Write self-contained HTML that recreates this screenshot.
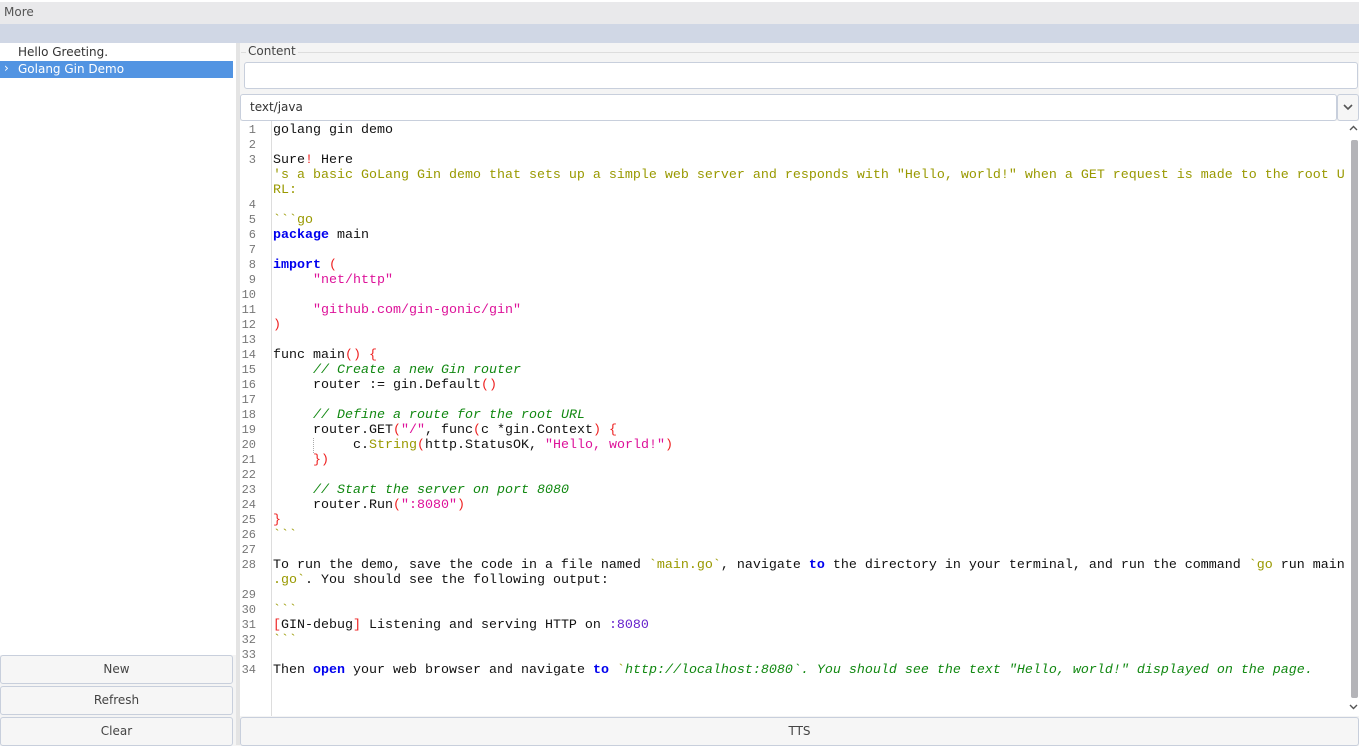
<!DOCTYPE html>
<html><head><meta charset="utf-8"><style>
*{box-sizing:border-box;margin:0;padding:0}
body{width:1359px;height:745px;overflow:hidden;background:#f4f4f4;font-family:"DejaVu Sans","Liberation Sans",sans-serif;font-size:12px;color:#333;position:relative}
.a{position:absolute}
.btn{position:absolute;border:1px solid #c8cfdc;border-radius:3px;background:#f6f6f6;text-align:center;color:#444;font-size:12px}
.code{font-family:"Liberation Mono",monospace;font-size:13.33px;color:#111;white-space:pre}
.ln{position:absolute;left:240px;width:16px;text-align:right;font-family:"Liberation Mono",monospace;font-size:12px;color:#777}
.o{color:#999900}.k{color:#0000ee;font-weight:bold}.s{color:#dd1199}.b{color:#ee2222}.c{color:#118811;font-style:italic}.p{color:#6622cc}
</style></head><body>
<div class="a" style="left:0;top:0;width:1359px;height:24px;background:#e9e9eb;border-top:2px solid #fff"></div>
<div class="a" style="left:4px;top:5px;font-size:12px;color:#555">More</div>
<div class="a" style="left:0;top:24px;width:1359px;height:19px;background:#d0d7e5"></div>
<div class="a" style="left:0;top:43px;width:236px;height:612px;background:#fff"></div>
<div class="a" style="left:18px;top:45px;color:#333">Hello Greeting.</div>
<div class="a" style="left:0;top:61px;width:233px;height:17px;background:#5294e2"></div>
<div class="a" style="left:4px;top:61px;color:#fff">›</div>
<div class="a" style="left:18px;top:62px;color:#fff">Golang Gin Demo</div>
<div class="btn" style="left:0;top:655px;width:233px;height:29px;line-height:27px">New</div>
<div class="btn" style="left:0;top:686px;width:233px;height:29px;line-height:27px">Refresh</div>
<div class="btn" style="left:0;top:717px;width:233px;height:29px;line-height:27px">Clear</div>
<div class="a" style="left:236px;top:43px;width:4px;height:702px;background:#e4e4e4"></div>
<div class="a" style="left:241px;top:52px;width:1118px;height:1px;background:#ddd"></div>
<div class="a" style="left:246px;top:44px;padding:0 2px;background:#f4f4f4;color:#444">Content</div>
<div class="a" style="left:244px;top:62px;width:1114px;height:27px;background:#fff;border:1px solid #c8cfdc;border-radius:3px"></div>
<div class="a" style="left:240px;top:94px;width:1097px;height:27px;background:#fff;border:1px solid #c8cfdc;border-radius:3px"></div>
<div class="a" style="left:250px;top:100px;color:#333">text/java</div>
<div class="a" style="left:1337px;top:94px;width:22px;height:27px;background:#f6f6f6;border:1px solid #c8cfdc;border-radius:3px"></div>
<svg class="a" style="left:1342px;top:101px" width="12" height="12"><path d="M2 4l4 4 4-4" stroke="#555" stroke-width="1.6" fill="none"/></svg>
<div class="a" style="left:240px;top:121px;width:1119px;height:595px;background:#fff"></div>
<div class="a" style="left:271px;top:121px;width:1px;height:595px;background:#ddd"></div>
<div class="a" style="left:1348px;top:121px;width:11px;height:595px;background:#fff"></div>
<div class="a" style="left:1351px;top:140px;width:7px;height:558px;background:#b4b4b8;border-radius:2px"></div>
<svg class="a" style="left:1348px;top:123px" width="11" height="10"><path d="M2 7l3.5-3.5L9 7" stroke="#555" stroke-width="1.4" fill="none"/></svg>
<svg class="a" style="left:1348px;top:702px" width="11" height="10"><path d="M2 3l3.5 3.5L9 3" stroke="#555" stroke-width="1.4" fill="none"/></svg>
<div class="btn" style="left:240px;top:717px;width:1119px;height:29px;line-height:27px">TTS</div>
<div class="ln" style="top:123px;line-height:15px">1<br>2<br>3<br><br><br>4<br>5<br>6<br>7<br>8<br>9<br>10<br>11<br>12<br>13<br>14<br>15<br>16<br>17<br>18<br>19<br>20<br>21<br>22<br>23<br>24<br>25<br>26<br>27<br>28<br><br>29<br>30<br>31<br>32<br>33<br>34</div>
<div class="a" style="left:313px;top:438px;width:1px;height:15px;border-left:1px dotted #aaa"></div>
<div class="code a" style="left:273px;top:123px;line-height:15px">golang gin demo

Sure<span class="b">!</span> Here
<span class="o">'s a basic GoLang Gin demo that sets up a simple web server and responds with "Hello, world!" when a GET request is made to the root U</span>
<span class="o">RL:</span>

<span class="o">&#96;&#96;&#96;go</span>
<span class="k">package</span> main

<span class="k">import</span> <span class="b">(</span>
     <span class="s">"net/http"</span>

     <span class="s">"github.com/gin-gonic/gin"</span>
<span class="b">)</span>

func main<span class="b">()</span> <span class="b">{</span>
     <span class="c">// Create a new Gin router</span>
     router := gin.Default<span class="b">()</span>

     <span class="c">// Define a route for the root URL</span>
     router.GET<span class="b">(</span><span class="s">"/"</span>, func<span class="b">(</span>c *gin.Context<span class="b">)</span> <span class="b">{</span>
          c.<span class="o">String</span><span class="b">(</span>http.StatusOK, <span class="s">"Hello, world!"</span><span class="b">)</span>
     <span class="b">})</span>

     <span class="c">// Start the server on port 8080</span>
     router.Run<span class="b">(</span><span class="s">":8080"</span><span class="b">)</span>
<span class="b">}</span>
<span class="o">&#96;&#96;&#96;</span>

To run the demo, save the code in a file named <span class="o">&#96;main.go&#96;</span>, navigate <span class="k">to</span> the directory in your terminal, and run the command <span class="o">&#96;go</span> run main
<span class="o">.go&#96;</span>. You should see the following output:

<span class="o">&#96;&#96;&#96;</span>
<span class="b">[</span>GIN-debug<span class="b">]</span> Listening and serving HTTP on <span class="p">:8080</span>
<span class="o">&#96;&#96;&#96;</span>

Then <span class="k">open</span> your web browser and navigate <span class="k">to</span> <span class="o">&#96;</span><span class="c">http://localhost:8080&#96;. You should see the text "Hello, world!" displayed on the page.</span></div>
</body></html>
